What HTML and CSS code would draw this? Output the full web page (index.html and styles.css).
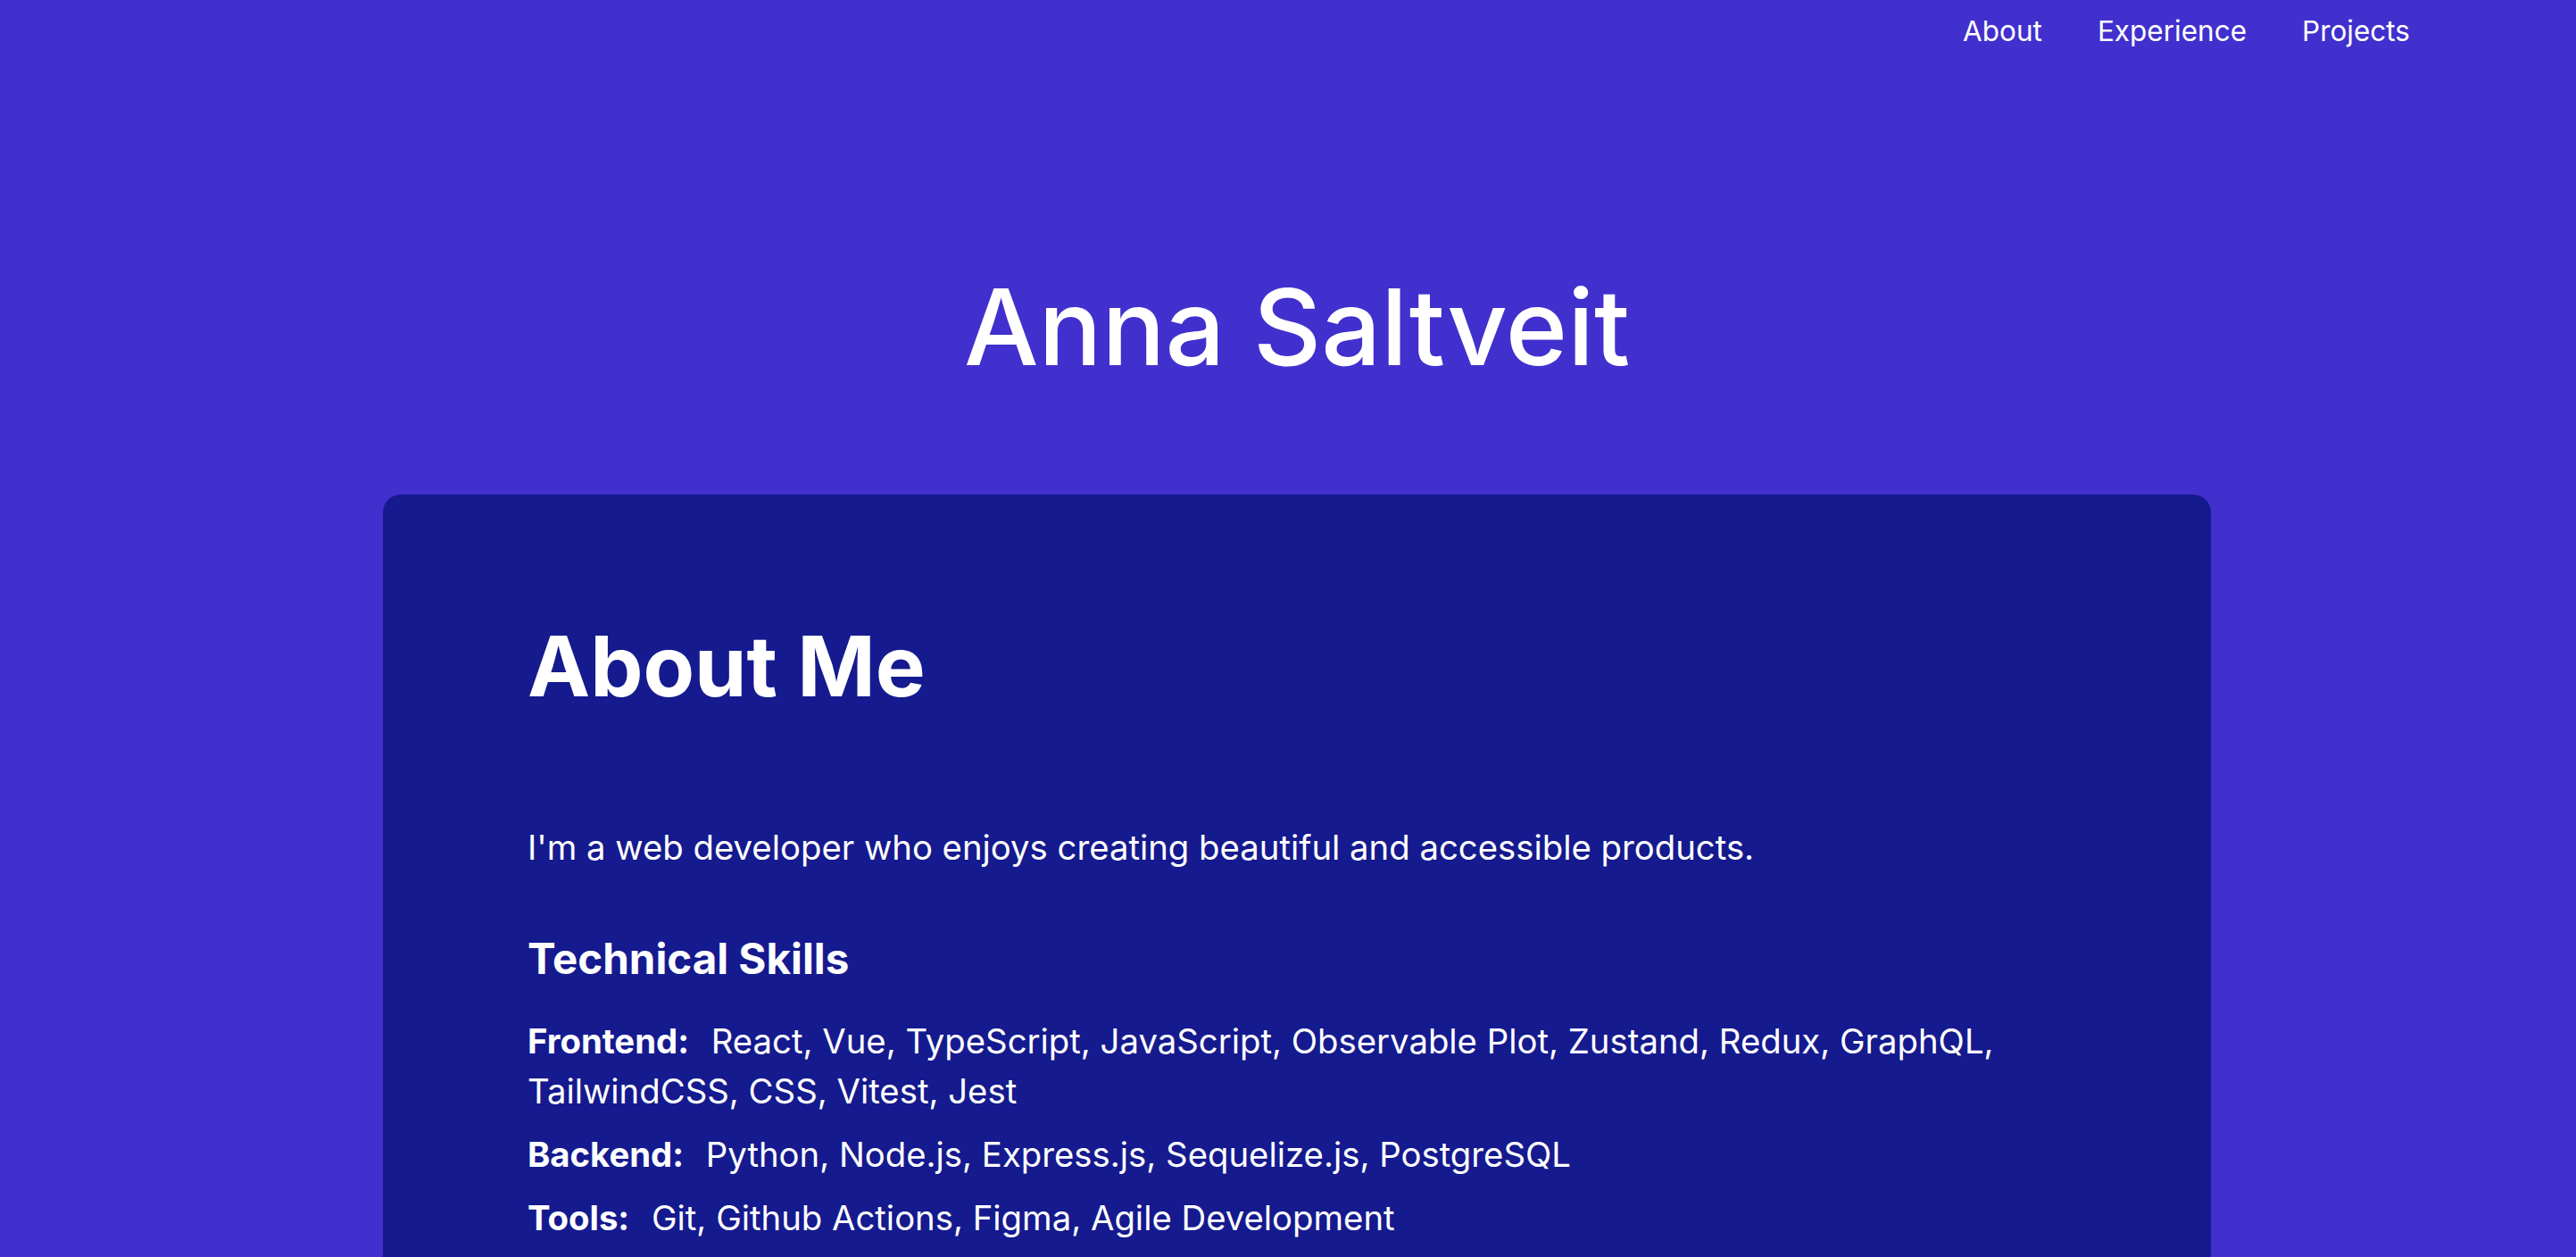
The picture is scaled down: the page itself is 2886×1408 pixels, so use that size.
FILE: index.html
```html
<!DOCTYPE html>
<html lang="en">
<head>
<meta charset="utf-8">
<title>Anna Saltveit</title>
<link rel="stylesheet" href="styles.css">
</head>
<body>
<header class="site-header">
  <nav class="nav">
    <a class="nav-link" href="#about">About</a>
    <a class="nav-link" href="#experience">Experience</a>
    <a class="nav-link" href="#projects">Projects</a>
  </nav>
</header>
<main class="main">
  <h1 class="name">Anna Saltveit</h1>
  <section class="card" id="about">
    <h2 class="card-title">About Me</h2>
    <p class="intro">I'm a web developer who enjoys creating beautiful and accessible products.</p>
    <h3 class="skills-title">Technical Skills</h3>
    <ul class="skills">
      <li class="skill"><strong class="skill-label">Frontend:</strong> <span class="skill-list">React, Vue, TypeScript, JavaScript, Observable Plot, Zustand, Redux, GraphQL, TailwindCSS, CSS, Vitest, Jest</span></li>
      <li class="skill"><strong class="skill-label">Backend:</strong> <span class="skill-list">Python, Node.js, Express.js, Sequelize.js, PostgreSQL</span></li>
      <li class="skill"><strong class="skill-label">Tools:</strong> <span class="skill-list">Git, Github Actions, Figma, Agile Development</span></li>
    </ul>
  </section>
</main>
</body>
</html>
```

FILE: styles.css
```css
* { box-sizing: border-box; }

html, body {
  margin: 0;
  padding: 0;
}

body {
  background: #4130cd;
  color: #ffffff;
  font-family: Inter, "Liberation Sans", sans-serif;
  min-height: 100vh;
}

.site-header {
  display: flex;
  justify-content: flex-end;
  padding: 12px 186px 0 0;
}

.nav {
  display: flex;
  gap: 62px;
}

.nav-link {
  color: #ffffff;
  text-decoration: none;
  font-size: 31.5px;
  line-height: 45px;
}

.main {
  display: flex;
  flex-direction: column;
  align-items: center;
  padding-left: 20px;
}

.name {
  margin: 250px 0 0 0;
  font-size: 118px;
  line-height: 1;
  font-weight: 500;
}

.card {
  width: 2048px;
  margin-top: 129px;
  background: #151a8e;
  border-radius: 20px;
  padding: 145px 162px 120px;
}

.card-title {
  margin: 0;
  font-size: 94px;
  line-height: 1;
  font-weight: 700;
}

.intro {
  margin: 128px 0 0 0;
  font-size: 38.3px;
  line-height: 56px;
}

.skills-title {
  margin: 69px 0 0 0;
  font-size: 47.5px;
  line-height: 56px;
  font-weight: 700;
}

.skills {
  list-style: none;
  margin: 36px 0 0 0;
  padding: 0;
  display: flex;
  flex-direction: column;
  gap: 15px;
}

.skill {
  font-size: 38.3px;
  line-height: 56px;
}

.skill-label {
  font-weight: 700;
  margin-right: 14px;
}
```
